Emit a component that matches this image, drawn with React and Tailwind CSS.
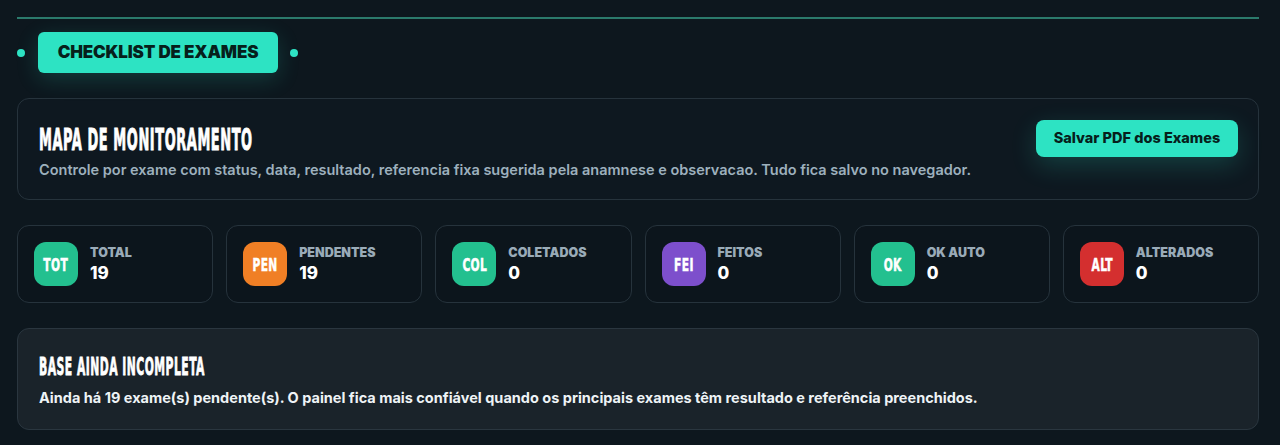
import React from "react";

const cond = { fontFamily: '"Liberation Sans Narrow", "DejaVu Sans Condensed", sans-serif' };

const stats = [
  { code: "TOT", label: "TOTAL", value: "19", bg: "bg-[#23c08f]" },
  { code: "PEN", label: "PENDENTES", value: "19", bg: "bg-[#f07f25]" },
  { code: "COL", label: "COLETADOS", value: "0", bg: "bg-[#23c08f]" },
  { code: "FEI", label: "FEITOS", value: "0", bg: "bg-[#7d4fcc]" },
  { code: "OK", label: "OK AUTO", value: "0", bg: "bg-[#23c08f]" },
  { code: "ALT", label: "ALTERADOS", value: "0", bg: "bg-[#d42f2f]" },
];

export default function App() {
  return (
    <div
      className="min-h-[445px] w-full bg-[#0d171e] pl-[17px] pr-[21px] pt-[17px] text-white"
      style={{ fontFamily: 'Inter, "Noto Sans", sans-serif' }}
    >
      <div className="h-[2px] w-full bg-[#2b7a6c]" />
      <div className="mt-[13px] flex items-center">
        <span className="h-[8px] w-[8px] rounded-full bg-[#2ee3c4]" />
        <div className="ml-[13px] flex h-[41px] w-[240px] items-center justify-center rounded-[6px] bg-[#2de3c3] shadow-[0_6px_22px_rgba(45,227,195,0.18)]">
          <span className="text-[17px] font-black tracking-[-0.01em] text-[#06201b]">CHECKLIST DE EXAMES</span>
        </div>
        <span className="ml-[12px] h-[8px] w-[8px] rounded-full bg-[#2ee3c4]" />
      </div>

      <div className="mt-[25px] flex h-[102px] items-center justify-between rounded-[12px] border border-[#26333c] bg-[#0e1820] pl-[21px] pr-[20px]">
        <div className="flex flex-col">
          <h1 className="mt-[6px] text-[30px] font-bold leading-[34px] tracking-[0.04em] text-white [-webkit-text-stroke:0.9px_white]" style={cond}>
            <span className="inline-block origin-left scale-x-[0.48] whitespace-nowrap">MAPA DE MONITORAMENTO</span>
          </h1>
          <p className="mt-[2px] text-[14.5px] font-semibold text-[#9db0bd]">
            Controle por exame com status, data, resultado, referencia fixa sugerida pela anamnese e observacao. Tudo fica salvo no navegador.
          </p>
        </div>
        <button className="mb-[22px] flex h-[37px] w-[202px] items-center justify-center rounded-[8px] bg-[#2de3c3] text-[14.5px] font-extrabold text-[#06201b] shadow-[0_8px_26px_rgba(45,227,195,0.2)]">
          Salvar PDF dos Exames
        </button>
      </div>

      <div className="mt-[25px] grid grid-cols-6 gap-[13px]">
        {stats.map((s) => (
          <div
            key={s.label}
            className="flex h-[78px] items-center rounded-[12px] border border-[#26333c] bg-[#0c151c] pl-[16px]"
          >
            <div className={`flex h-[44px] w-[44px] items-center justify-center rounded-[12px] ${s.bg}`}>
              <span className="inline-block scale-x-[0.66] text-[18px] font-bold tracking-[0.03em] text-white [-webkit-text-stroke:0.5px_white]" style={cond}>{s.code}</span>
            </div>
            <div className="ml-[12px] flex flex-col">
              <span className="text-[12.5px] font-black leading-[16px] text-[#9aabb8]">{s.label}</span>
              <span className="mt-[2px] text-[17px] font-extrabold leading-[20px] text-white">{s.value}</span>
            </div>
          </div>
        ))}
      </div>

      <div className="mt-[25px] flex h-[102px] flex-col justify-center rounded-[12px] border border-[#2a363f] bg-[#1a232a] pl-[21px]">
        <h2 className="mt-[3px] text-[24px] font-bold leading-[28px] tracking-[0.04em] text-white [-webkit-text-stroke:0.8px_white]" style={cond}>
          <span className="inline-block origin-left scale-x-[0.5] whitespace-nowrap">BASE AINDA INCOMPLETA</span>
        </h2>
        <p className="mt-[6px] text-[14.5px] font-bold text-[#eef3f6]">
          Ainda há 19 exame(s) pendente(s). O painel fica mais confiável quando os principais exames têm resultado e referência preenchidos.
        </p>
      </div>
    </div>
  );
}
